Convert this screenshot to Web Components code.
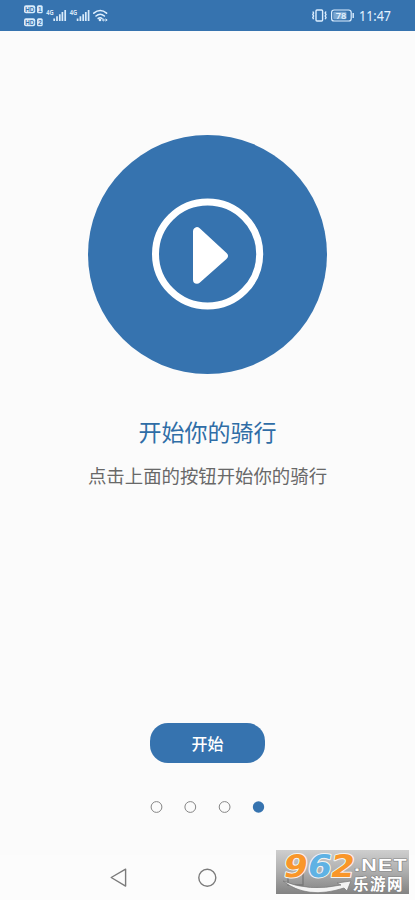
<!DOCTYPE html>
<html lang="zh-CN">
<head>
<meta charset="utf-8">
<title>开始你的骑行</title>
<style>
html,body{margin:0;height:100%;overflow:hidden;background:#fbfbfb}
body{font-family:"Noto Sans CJK SC",sans-serif}
</style>
</head>
<body>
<ride-app></ride-app>
<script>
const define=(name,html)=>customElements.define(name,class extends HTMLElement{
  constructor(){super();this.attachShadow({mode:'open'}).innerHTML=html;}
});

define('status-bar',`<style>
:host{display:block;height:31px;background:#3673af;flex:none}
svg{display:block}
text{fill:#e4f2ff;font-family:"Noto Sans",sans-serif}
.k{fill:#3673af;font-family:"Liberation Sans",sans-serif}
</style>
<svg width="415" height="31" viewBox="0 0 415 31">
 <g fill="#d9ebfb"><rect x="24" y="5.2" width="11.2" height="8" rx="2"/><rect x="37" y="5.2" width="5.7" height="8" rx="1.5"/>
 <rect x="24" y="18.2" width="11.2" height="8" rx="2"/><rect x="37" y="18.2" width="5.7" height="8" rx="1.5"/></g>
 <g font-size="6.6" font-weight="700"><text class="k" x="25.2" y="11.6" textLength="9" lengthAdjust="spacingAndGlyphs">HD</text><text class="k" x="38" y="11.6">1</text>
 <text class="k" x="25.2" y="24.6" textLength="9" lengthAdjust="spacingAndGlyphs">HD</text><text class="k" x="38" y="24.6">2</text></g>
 <g font-size="7" font-weight="600"><text x="46.3" y="14.8" textLength="7.4" lengthAdjust="spacingAndGlyphs">4G</text><text x="69.8" y="14.8" textLength="7.4" lengthAdjust="spacingAndGlyphs">4G</text></g>
 <g stroke="#d9ebfb" stroke-width="1.7"><path d="M54.2 21v-2.5M57 21v-4.7M59.8 21v-6.8M62.4 21v-9M65.2 21V10"/><path d="M77.6 21v-2.5M80.4 21v-4.7M83.2 21v-6.8M85.8 21v-9M88.6 21V10"/></g>
 <g fill="none" stroke="#e0f0ff" stroke-width="1.6" stroke-linecap="round"><path d="M93.8 13.2Q100.2 7.8 106.6 13.2M96 16Q100.2 12.5 104.4 16M98.2 18.5Q100.2 17 102 18.5"/></g>
 <circle cx="100" cy="20" r="1.3" fill="#e0f0ff"/><path d="M102.5 20h4.5m-3-1.2-1.6 1.2 1.6 1.2m1.6-2.4 1.6 1.2-1.6 1.2" stroke="#d9ebfb" fill="none" stroke-width=".9"/>
 <g fill="none" stroke="#dceeff" stroke-width="1.4"><rect x="316" y="10" width="6.6" height="11" rx="1"/><path d="M312.8 11.5l.8 1.5-.8 1.5.8 1.5-.8 1.5.8 1.8M326 11.5l-.8 1.5.8 1.5-.8 1.5.8 1.5-.8 1.8"/>
 <rect x="331.6" y="10" width="19.6" height="11" rx="2.6" stroke-width="1.2"/><path d="M353.2 13v5"/></g>
 <rect x="333.3" y="11.7" width="13.2" height="7.6" rx="1" fill="#7ba6cf"/>
 <text x="335.8" y="19.2" font-size="9.6" font-weight="600" textLength="10.6" lengthAdjust="spacingAndGlyphs">78</text>
 <text x="359" y="20.8" font-size="13.5" textLength="32" lengthAdjust="spacingAndGlyphs">11:47</text>
</svg>`);

define('play-disc',`<style>
:host{display:block;width:239px;height:239px;border-radius:50%;background:#3673af}
svg{display:block}
</style>
<svg width="239" height="239" viewBox="0 0 239 239"><circle cx="119.6" cy="119" r="52.1" fill="none" stroke="#fff" stroke-width="7"/>
<path d="M109 96.3V144.7L135.8 121Z" fill="#fff" stroke="#fff" stroke-width="8" stroke-linejoin="round"/></svg>`);

define('ride-button',`<style>
:host{display:flex;width:115px;height:40px;border-radius:18px;background:#3673af;color:#fff;font-size:16px;font-weight:500;line-height:24px;align-items:center;justify-content:center}
</style><span><slot></slot></span>`);

define('page-dots',`<style>
:host{display:block}
svg{display:block}
</style><svg width="115" height="12" viewBox="150 0 115 12" fill="none" stroke="#858585"><circle cx="156.5" cy="6" r="5.4"/><circle cx="190.3" cy="6" r="5.4"/><circle cx="224.6" cy="6" r="5.4"/><circle cx="258.5" cy="6" r="5.7" fill="#3673af" stroke="none"/></svg>`);

define('nav-bar',`<style>
:host{display:block;height:45px;flex:none;background:#fcfcfc}
svg{display:block}
</style>
<svg width="415" height="45" viewBox="0 0 415 45" fill="none" stroke="#7b7b7b" stroke-width="1.4" stroke-linejoin="round"><path d="M111.2 22.5 125.6 14.2V31.1Z"/><circle cx="207.3" cy="22.7" r="8.5"/></svg>`);

define('site-mark',`<style>
:host{display:block;position:absolute;left:276px;top:850px;width:133px;height:44px}
svg{display:block;overflow:visible}
.n{font-family:"DejaVu Sans",sans-serif;font-weight:700;font-size:31px}
.t{font-family:"Liberation Sans",sans-serif;font-weight:700;font-size:17px;letter-spacing:1px;fill:#fff}
.c{font-family:"Liberation Sans","Noto Sans CJK SC",sans-serif;font-weight:700;font-size:15.5px;fill:#fff}
text{paint-order:stroke;stroke-linejoin:round}
</style>
<svg width="133" height="44" viewBox="0 0 133 44">
<defs><linearGradient id="g" x2="0" y2="1"><stop stop-color="#cecece"/><stop offset=".5" stop-color="#adadad"/><stop offset="1" stop-color="#828282"/></linearGradient></defs>
<rect width="133" height="44" fill="url(#g)"/>
<path d="M12 22v13h15V22" fill="none" stroke="#777" stroke-width="1.3"/>
<path d="M7 31Q33 42 65 35L61 33 75 31 71 41 68 38Q31 50 7 31Z" fill="#f3f3f3" stroke="#777" stroke-width=".7"/>
<g class="n" stroke="#f4f4f4" stroke-width="2" transform="translate(0 27) skewX(-10)"><text x="6" y="0" fill="#f9962a" textLength="24" lengthAdjust="spacingAndGlyphs">9</text><text x="30" y="0" fill="#5fb2e4" textLength="24" lengthAdjust="spacingAndGlyphs">6</text><text x="53" y="0" fill="#f9962a" textLength="24" lengthAdjust="spacingAndGlyphs">2</text></g>
<g stroke="#858585" stroke-width="1.2"><text class="t" x="78" y="21.3" textLength="54" lengthAdjust="spacingAndGlyphs">.NET</text><text class="c" x="77" y="40" textLength="49.5">乐游网</text></g>
</svg>`);

define('ride-app',`<style>
:host{display:flex;flex-direction:column;position:relative;width:415px;height:900px;background:#fbfbfb}
main{flex:1;display:flex;flex-direction:column;align-items:center}
play-disc{margin-top:104px}
h1{margin:39px 0 0;font-size:23px;line-height:36px;font-weight:400;color:#2f6da6}
p{margin:12px 0 0;font-size:18.4px;line-height:28px;font-weight:400;color:#686868}
ride-button{margin-top:234px}
page-dots{margin-top:38px}
</style>
<status-bar></status-bar>
<main><play-disc></play-disc><h1>开始你的骑行</h1><p>点击上面的按钮开始你的骑行</p><ride-button>开始</ride-button><page-dots></page-dots></main>
<nav-bar></nav-bar><site-mark></site-mark>`);
</script>
</body>
</html>
